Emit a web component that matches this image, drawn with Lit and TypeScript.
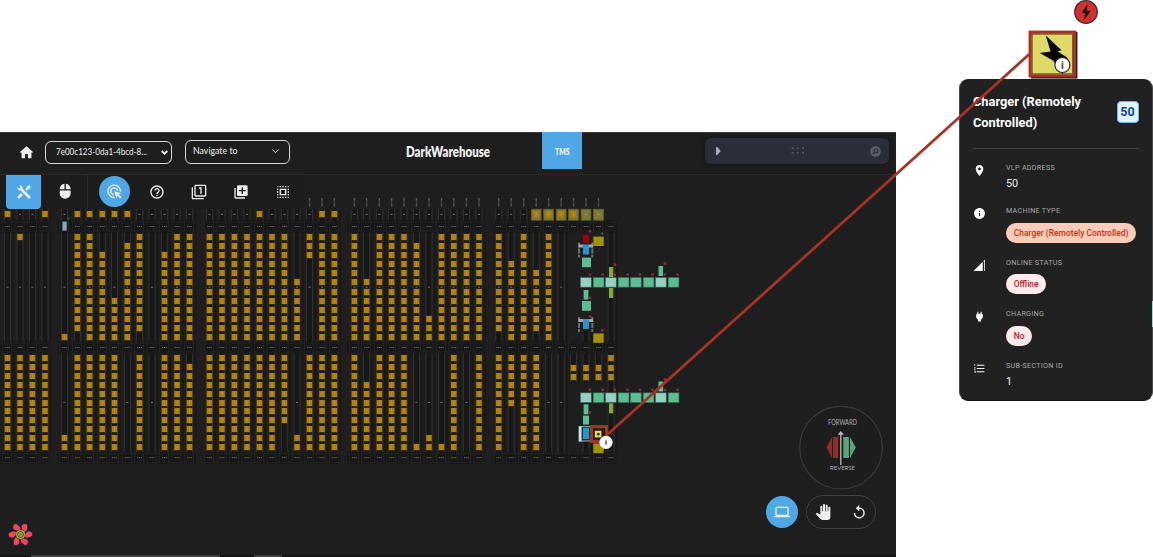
import { LitElement, html, svg, css } from "lit";
import { customElement, property } from "lit/decorators.js";

const ICONS: Record<string, string> = {
  home: "M10 20v-6h4v6h5v-8h3L12 3 2 12h3v8z",
  tools: "M21.71 20.29L20.29 21.71A1 1 0 0 1 18.88 21.71L7 9.85A3.81 3.81 0 0 1 6 10A4 4 0 0 1 2.22 4.7L4.76 7.24L5.29 6.71L6.71 5.29L7.24 4.76L4.7 2.22A4 4 0 0 1 10 6A3.81 3.81 0 0 1 9.85 7L21.71 18.88A1 1 0 0 1 21.71 20.29M2.29 18.88A1 1 0 0 0 2.29 20.29L3.71 21.71A1 1 0 0 0 5.12 21.71L10.59 16.25L7.76 13.42M20 2L16 4V6L13.83 8.17L15.83 10.17L18 8H20L22 4Z",
  mouse: "M13 1.07V9h7c0-4.08-3.05-7.44-7-7.93zM4 15c0 4.42 3.58 8 8 8s8-3.58 8-8v-4H4v4zm7-13.93C7.05 1.56 4 4.92 4 9h7V1.07z",
  click: "M11.71 17.99C8.53 17.84 6 15.22 6 12c0-3.31 2.69-6 6-6 3.22 0 5.84 2.53 5.99 5.71l-2.1-.63C15.48 9.31 13.89 8 12 8c-2.21 0-4 1.79-4 4 0 1.89 1.31 3.48 3.08 3.89l.63 2.1zM22 12c0 .3-.01.6-.04.9l-1.97-.59c.01-.1.01-.21.01-.31 0-4.42-3.58-8-8-8s-8 3.58-8 8 3.58 8 8 8c.1 0 .21 0 .31-.01l.59 1.97c-.3.03-.6.04-.9.04-5.52 0-10-4.48-10-10S6.48 2 12 2s10 4.48 10 10zm-3.77 4.26L22 15l-10-3 3 10 1.26-3.77 4.27 4.27 1.98-1.98-4.28-4.26z",
  help: "M11 18h2v-2h-2v2zm1-16C6.48 2 2 6.48 2 12s4.48 10 10 10 10-4.48 10-10S17.52 2 12 2zm0 18c-4.41 0-8-3.59-8-8s3.59-8 8-8 8 3.59 8 8-3.59 8-8 8zm0-14c-2.21 0-4 1.79-4 4h2c0-1.1.9-2 2-2s2 .9 2 2c0 2-3 1.75-3 5h2c0-2.25 3-2.5 3-5 0-2.21-1.79-4-4-4z",
  filter1: "M3 5H1v16c0 1.1.9 2 2 2h16v-2H3V5zm11 10h2V5h-4v2h2v8zm7-14H7c-1.1 0-2 .9-2 2v14c0 1.1.9 2 2 2h14c1.1 0 2-.9 2-2V3c0-1.1-.9-2-2-2zm0 16H7V3h14v14z",
  add: "M4 6H2v14c0 1.1.9 2 2 2h14v-2H4V6zm16-4H8c-1.1 0-2 .9-2 2v12c0 1.1.9 2 2 2h12c1.1 0 2-.9 2-2V4c0-1.1-.9-2-2-2zm-1 9h-4v4h-2v-4H9V9h4V5h2v4h4v2z",
  select: "M3 5h2V3c-1.1 0-2 .9-2 2zm0 8h2v-2H3v2zm4 8h2v-2H7v2zM3 9h2V7H3v2zm10-6h-2v2h2V3zm6 0v2h2c0-1.1-.9-2-2-2zM5 21v-2H3c0 1.1.9 2 2 2zm-2-4h2v-2H3v2zM9 3H7v2h2V3zm2 18h2v-2h-2v2zm8-8h2v-2h-2v2zm0 8c1.1 0 2-.9 2-2h-2v2zm0-12h2V7h-2v2zm0 8h2v-2h-2v2zm-4 4h2v-2h-2v2zm0-16h2V3h-2v2zM7 17h10V7H7v10zm2-8h6v6H9V9z",
  place: "M12 2C8.13 2 5 5.13 5 9c0 5.25 7 13 7 13s7-7.75 7-13c0-3.87-3.13-7-7-7zm0 9.5c-1.38 0-2.5-1.12-2.5-2.5s1.12-2.5 2.5-2.5 2.5 1.12 2.5 2.5-1.12 2.5-2.5 2.5z",
  info: "M12 2C6.48 2 2 6.48 2 12s4.48 10 10 10 10-4.48 10-10S17.52 2 12 2zm1 15h-2v-6h2v6zm0-8h-2V7h2v2z",
  signal: "M1 22L18 5V22zM18.8 4.2L22 1V22H20.6V4.6H18.8z",
  power: "M16.01 7L16 3h-2v4h-4V3H8v4h-.01C7 6.99 6 7.99 6 8.99v5.49L9.5 18v3h5v-3l3.5-3.51v-5.5c0-1-1-2-1.99-1.99z",
  list: "M2 17h2v.5H3v1h1v.5H2v1h3v-4H2v1zm1-9h1V4H2v1h1v3zm-1 3h1.8L2 13.1v.9h3v-1H3.2L5 10.9V10H2v1zm5-6v2h14V5H7zm0 14h14v-2H7v2zm0-6h14v-2H7v2z",
  laptop: "M20 18c1.1 0 1.99-.9 1.99-2L22 6c0-1.1-.9-2-2-2H4c-1.1 0-2 .9-2 2v10c0 1.1.9 2 2 2H0v2h24v-2h-4zM4 6h16v10H4V6z",
  hand: "M23 5.5V20c0 2.2-1.8 4-4 4h-7.3c-1.08 0-2.1-.43-2.85-1.19L1 14.83s1.26-1.23 1.3-1.25c.22-.19.49-.29.79-.29.22 0 .42.06.6.16.04.01 4.31 2.46 4.31 2.46V4c0-.83.67-1.5 1.5-1.5S11 3.17 11 4v7h1V1.5c0-.83.67-1.5 1.5-1.5S15 .67 15 1.5V11h1V2.5c0-.83.67-1.5 1.5-1.5s1.5.67 1.5 1.5V11h1V5.5c0-.83.67-1.5 1.5-1.5s1.5.67 1.5 1.5z",
  replay: "M12 5V1L7 6l5 5V7c3.31 0 6 2.69 6 6s-2.69 6-6 6-6-2.69-6-6H4c0 4.42 3.58 8 8 8s8-3.58 8-8-3.58-8-8-8z",
};

const icon = (name: string, size = 16) => html`<svg class="icon" width=${size} height=${size} viewBox="0 0 24 24"><path d=${ICONS[name]} /></svg>`;

// Each storage lane: x centre, tote at the head, filled slots above and below the middle aisle.
type Lane = [x: number, top: number, upper: string, lower: string];
const FULL = "0-11";
const LOW = "0-10";
const LANES: Lane[] = [
  [7.5, 1, "", LOW], [20, 0, "0-0", LOW], [32.4, 0, "", LOW], [45, 1, "", LOW],
  [64.5, 0, "11-11", "9-10"], [77.4, 1, "0-10", LOW], [89.6, 1, FULL, LOW], [102.3, 1, "2-11", LOW],
  [114.5, 1, "7-11", LOW], [127.3, 1, "1-11", ""], [139.5, 0, "0-10", LOW], [152, 0, "", ""],
  [164.5, 0, "2-11", LOW], [177, 0, FULL, LOW], [189.5, 0, FULL, "1-10"],
  [209.5, 0, FULL, LOW], [222, 0, FULL, LOW], [234.4, 0, FULL, LOW], [247, 0, FULL, LOW],
  [259.5, 1, FULL, LOW], [272, 0, FULL, LOW], [284.4, 0, FULL, "0-7"], [297, 0, "5-11", "9-10"],
  [309.5, 0, "0-2", LOW], [322, 1, FULL, LOW], [334.4, 1, FULL, LOW],
  [354.4, 0, FULL, LOW], [366.6, 0, "5-11", "3-10"], [379.4, 0, FULL, LOW], [391.6, 0, FULL, LOW],
  [404, 0, FULL, LOW], [416.5, 0, "1-11", "10-10"], [429, 0, "9-11", "9-10"], [441.5, 0, FULL, "10-10"],
  [453.8, 0, FULL, LOW], [466.5, 0, FULL, ""], [479, 0, FULL, LOW],
  [498.7, 0, "0-10", LOW], [511.2, 0, "3-11", "0-5"], [523.7, 0, FULL, LOW], [536.2, 1, "4-10", LOW],
  [548.6, 1, FULL, ""], [561.2, 1, "", ""],
];

@customElement("warehouse-map")
export class WarehouseMap extends LitElement {
  static styles = css`
    :host { display: block; }
    svg { display: block; }
  `;

  private range(text: string): number[] {
    if (!text) return [];
    const [a, b] = text.split("-").map(Number);
    return Array.from({ length: b - a + 1 }, (_, i) => a + i);
  }

  private tote(x: number, y: number) {
    const top = Math.round(y - 3);
    return svg`<rect x=${x - 2.8} y=${top - 0.1} width="5.6" height="6.3" fill="#ae7f0d"/><path d="M${x} ${top + 0.5}v5" stroke="#bb8d1c" stroke-width="1"/>`;
  }

  private track(x: number, y: number, h: number) {
    return svg`<rect x=${x - 2.6} y=${y} width="5.2" height=${h} fill="#171717"/><path d="M${x - 3} ${y}v${h}M${x + 3} ${y}v${h}" stroke="#323232" stroke-width=".9"/><path d="M${x + 5.6} ${y}v${h}" stroke="#191919" stroke-width="2"/>`;
  }

  private box(x: number, y: number, w: number, h: number, fill: string) {
    return svg`<rect x=${x} y=${y} width=${w} height=${h} fill=${fill}/>`;
  }

  private conveyor(y: number) {
    return [580.3, 593, 605.3, 618, 630.3, 643, 655.3, 668].map((x, i) =>
      svg`<rect x=${x + 0.3} y=${y + 0.3} width="10.6" height="9.4" fill=${[0, 2, 6].includes(i) ? "#96d0c4" : "#5bbd92"} stroke="#3d7f66" stroke-width=".6"/>
      <circle cx=${x + 9.6} cy=${y - 2.8} r="1.4" fill="#9a282c"/>`);
  }

  private crane(y: number) {
    return svg`<path d="M579 ${y}v15M592.3 ${y}v15" stroke="#6f6f6f" stroke-width="2" stroke-dasharray="5 1"/>
      <path d="M578.6 ${y + 3.5}h5M589 ${y + 3.5}h4" stroke="#a8a8a8" stroke-width="3"/>
      <rect x="583" y=${y + 2} width="6" height="10" fill="#2496c8"/>`;
  }

  render() {
    const bars = [[-2, 52.5], [58, 138], [204, 136.5], [347, 138], [492.5, 124]];
    const xs = [...LANES.map((l) => l[0]), 573.5, 586, 598.5];
    const dots = [[590, 231.4], [615, 264.6], [665, 263.5], [590, 298], [590, 316.5], [602.3, 330.3], [665, 379.5], [590, 412.6]];
    return html`<svg width="896" height="425" viewBox="0 132 896 425">
      ${LANES.map(([x]) => svg`${this.track(x, 209, 12)}${this.track(x, 232, 110)}${this.track(x, 353, 99)}`)}
      ${this.track(611, 221, 231)}
      ${[573.5, 586, 598.5, 611].map((x) => this.track(x, 354, 28))}
      ${this.track(586, 331, 12)}${this.track(586, 441, 12)}
      ${xs.filter((x) => x > 305 || x === 45).map((x) => svg`<path d="M${x} 198v9" stroke="#585858" stroke-width="1.5" stroke-dasharray="3 .8 1 .8"/>`)}
      ${[220.5, 341.5, 452].map((y) => bars.map(([x, w]) => svg`<rect x=${x} y=${y} width=${w} height="12" fill="#171717"/><path d="M${x} ${y + 1.5}h${w}M${x} ${y + 10.5}h${w}" stroke="#202020" stroke-width="1"/>`))}
      ${[226.5, 347.5, 457.6].map((y) => [...xs, 611].map((x) => svg`<path d="M${x - 5} ${y - 6}v12M${x + 4} ${y - 6}v12" stroke="#232323" stroke-width="1"/><path d="M${x - 2.5} ${y}h5" stroke="#686868" stroke-width=".9" stroke-dasharray="1.4 .5"/>`))}
      ${LANES.map(([x]) => [214.4, 287.2, 402.4].map((y) => svg`<path d="M${x - 1} ${y}h2" stroke="#777" stroke-width="1"/>`))}
      ${[536.2, 548.6, 561.2, 573.5, 586, 598.5].map((x) => svg`<rect x=${x - 4.9} y="209.2" width="9.8" height="11" fill="#7e7838" stroke="#655f24" stroke-width=".8"/><path d="M${x - 1} 214.4h2" stroke="#aaa" stroke-width=".8"/>`)}
      ${LANES.map(([x, top, up, low]) => svg`
        ${top ? this.tote(x, 214.4) : ""}
        ${this.range(up).map((i) => this.tote(x, 237 + i * 9.09))}
        ${this.range(low).map((i) => this.tote(x, 358 + i * 8.9))}`)}
      ${this.tote(573.5, 214.4)}
      ${[573.5, 586, 598.5, 611].map((x) => [368, 377].map((y) => this.tote(x, y)))}
      ${this.tote(611, 358.4)}
      <rect x="62.4" y="221.7" width="4.4" height="9" fill="#9aa5aa" stroke="#2c7188" stroke-width=".7"/>
      <circle cx="68.5" cy="218.6" r="1.2" fill="#1c6b28"/>
      ${this.box(609, 267, 4.2, 10, "#86a83a")}${this.box(609, 288, 4.2, 10, "#86a83a")}${this.box(609, 403.3, 4.2, 10, "#86a83a")}
      ${this.conveyor(277.4)}${this.conveyor(392.6)}
      ${this.box(658.5, 266, 4.6, 10, "#5bbd92")}${this.box(658.5, 381.5, 4.6, 10, "#5bbd92")}
      ${this.box(583, 235, 6, 8, "#9c0205")}
      ${this.crane(242.5)}${this.crane(317)}
      ${this.box(582, 257.6, 9, 9.6, "#5bbd92")}${this.box(583.6, 290, 4.8, 9.6, "#5bbd92")}${this.box(582, 301, 9, 9.8, "#5bbd92")}
      ${this.box(583.6, 404.3, 4.8, 10, "#5bbd92")}${this.box(583, 415.6, 6, 9, "#5bbd92")}
      ${this.box(593.3, 236.6, 10.4, 9.4, "#a59106")}${this.box(593.3, 333.4, 10.4, 9.4, "#a59106")}${this.box(593.3, 443.5, 10.4, 9.6, "#a59106")}
      <rect x="579" y="426.6" width="13.5" height="14.4" fill="#253238" stroke="#9cc0c4" stroke-width=".9"/>
      ${this.box(579, 426.4, 2.6, 15, "#d8dcdc")}${this.box(583, 428, 6, 11, "#2496c8")}
      ${dots.map(([x, y]) => svg`<circle cx=${x} cy=${y} r="1.4" fill="#9a282c"/>`)}
      <circle cx="602.3" cy="233.5" r="1.3" fill="#226d30"/>
      ${this.box(594.8, 430.8, 6.6, 6.6, "#e6df55")}
      <circle cx="598.3" cy="434.2" r="1.4" fill="#33300a"/>
      <rect x="591.6" y="426.6" width="15" height="15" fill="none" stroke="#a93226" stroke-width="3"/>
    </svg>`;
  }
}

@customElement("info-card")
export class InfoCard extends LitElement {
  static styles = css`
    :host { display: block; box-sizing: border-box; background: #212121; color: #fff; border-radius: 9px; border: 1px solid #4b4b4b; border-top-color: #212121; border-bottom-color: #111; padding: 11.5px 13px 0 13.5px; font-family: Roboto, sans-serif; }
    .head { display: flex; align-items: center; justify-content: space-between; height: 56px; border-bottom: 1px solid #424242; }
    .title { font-size: 12.8px; line-height: 20.5px; font-weight: 700; width: 118px; padding-bottom: 14px; }
    .badge { box-sizing: border-box; width: 22px; height: 22px; margin-bottom: 15px; border-radius: 4px; border: 1px solid #64b5f6; background: #e3f2fd; color: #0d47a1; font-size: 12.5px; font-weight: 700; line-height: 20px; text-align: center; }
    .rows { display: grid; grid-template-rows: 43px 51.8px 51.4px 52px 40px; padding-top: 14.5px; }
    .row { display: grid; grid-template-columns: 33px 1fr; align-items: start; }
    .icon { fill: #fff; margin-top: 1px; }
    .label { font-size: 7.2px; line-height: 10px; letter-spacing: .28px; color: #a6a6a6; white-space: nowrap; }
    .value { font-size: 10.8px; line-height: 14px; margin-top: 4px; color: #eee; }
    .chip { display: inline-block; box-sizing: border-box; margin-top: 6.5px; height: 20px; line-height: 20px; border-radius: 10px; padding: 0 7.8px; font-size: 8.45px; font-weight: 500; white-space: nowrap; background: #ffebee; color: #b71c1c; }
    .peach { background: #ffccbc; color: #bf360c; }
  `;
  render() {
    const row = (ic: string, label: string, value: unknown) => html`<div class="row">${icon(ic, 13)}<div><div class="label">${label}</div>${value}</div></div>`;
    return html`
      <div class="head"><div class="title">Charger (Remotely Controlled)</div><div class="badge">50</div></div>
      <div class="rows">
        ${row("place", "VLP ADDRESS", html`<div class="value">50</div>`)}
        ${row("info", "MACHINE TYPE", html`<span class="chip peach">Charger (Remotely Controlled)</span>`)}
        ${row("signal", "ONLINE STATUS", html`<span class="chip">Offline</span>`)}
        ${row("power", "CHARGING", html`<span class="chip">No</span>`)}
        ${row("list", "SUB-SECTION ID", html`<div class="value">1</div>`)}
      </div>`;
  }
}

@customElement("fit-text")
export class FitText extends LitElement {
  static styles = css`
    :host { display: block; height: 14px; }
    svg { display: block; overflow: visible; }
    text { font-family: Lato, sans-serif; fill: currentColor; }
  `;
  @property() text = "";
  @property({ type: Number }) width = 50;
  @property({ type: Number }) size = 10;
  @property({ type: Number }) weight = 400;
  render() {
    return html`<svg width=${this.width} height="14"><text x="0" y="11" font-size=${this.size} font-weight=${this.weight} textLength=${this.width} lengthAdjust="spacingAndGlyphs">${this.text}</text></svg>`;
  }
}

@customElement("app-root")
export class AppRoot extends LitElement {
  static styles = css`
    :host { display: block; position: relative; width: 1153px; height: 557px; overflow: hidden; background: #fff; font-family: Lato, sans-serif; }
    .page { display: grid; grid-template-columns: 896px 62.5px 194px; height: 557px; }
    .console { position: relative; margin-top: 132px; height: 425px; background: #1e1e1e; color: #eee; display: flex; flex-direction: column; overflow: hidden; }
    .map { position: absolute; inset: 0; }
    .icon { fill: #eee; display: block; }
    .header { position: relative; box-sizing: border-box; height: 42.5px; flex: none; display: flex; background: #1e1e1e; border-top: 1px solid #3c3c3c; border-bottom: 1px solid #292929; }
    .home { width: 27.4px; margin-left: 17.6px; padding-top: 11px; }
    .pick { box-sizing: border-box; display: flex; justify-content: space-between; border: 1px solid #d8d8d8; border-radius: 6px; }
    .site { width: 127px; height: 22.5px; margin: 8px 13px 0 0; padding: 2px 2px 0 10px; }
    .nav { width: 105px; height: 24px; margin-top: 7px; padding: 2px 9px 0 7px; }
    .chev { fill: none; stroke: #eee; display: block; margin-top: 4px; }
    .brand { margin: 13px 0 0 116px; }
    .tms { width: 40px; height: 37px; margin: -1px 0 0 52.4px; box-sizing: border-box; padding: 11.5px 0 0 13px; background: #4fa8e5; }
    .search { width: 184px; height: 26px; margin: 5px 0 0 123px; background: #2b2e3a; border-radius: 6px; box-shadow: 0 0 4px #111; display: flex; align-items: center; justify-content: space-between; box-sizing: border-box; padding: 0 8px 0 10.5px; }
    .grip { margin-left: 4px; }
    .toolbar { position: relative; flex: none; display: flex; align-items: center; width: 303.5px; height: 34px; background: #1c1c1c; border-radius: 0 0 4px 4px; }
    .cell { display: flex; align-items: center; justify-content: center; }
    .tab { flex: none; width: 35px; height: 34px; margin-left: 6px; border-radius: 0 0 4px 4px; background: #4fa8e5; }
    .mouse { box-sizing: border-box; flex: none; width: 47px; height: 34px; padding-left: 3px; border-right: 1px solid #2b2b2b; }
    .tools { flex: none; display: grid; grid-template-columns: repeat(5, 42px); padding-left: 5.5px; }
    .disc { width: 31px; height: 31px; border-radius: 50%; background: #4fa8e5; display: flex; align-items: center; justify-content: center; }
    .dial { position: absolute; left: 799px; top: 274px; }
    .dial text { font-family: Lato, sans-serif; fill: #b0b0b0; }
    .views { position: absolute; left: 766px; top: 363px; display: flex; align-items: center; gap: 8px; }
    .disc.big { width: 32px; height: 32px; }
    .pill { box-sizing: border-box; width: 70px; height: 34px; border: 1.5px solid #414141; border-radius: 17px; display: flex; align-items: center; justify-content: space-between; padding: 0 8px; }
    .flower { position: absolute; left: 7px; top: 388.5px; }
    .foot { position: relative; margin-top: auto; height: 2px; background: #171314; display: flex; gap: 34px; padding-left: 31px; }
    .foot i { width: 189px; background: #3c3c3c; }
    .foot b { width: 28px; background: #3c3c3c; }
    info-card { grid-column: 3; margin-top: 79px; height: 322px; }
    .overlay { position: absolute; left: 0; top: 0; }
    .mark { font-family: Roboto, sans-serif; font-weight: 700; text-anchor: middle; fill: #444; }
  `;

  render() {
    const petals = [0, 60, 120, 180, 240, 300];
    return html`
      <div class="page">
        <div class="console">
          <warehouse-map class="map"></warehouse-map>
          <div class="header">
            <div class="home">${icon("home", 17)}</div>
            <div class="pick site">
              <fit-text text="7e00c123-0da1-4bcd-8..." width="91" size="10.2"></fit-text>
              <svg class="chev" width="9" height="9" viewBox="0 0 9 9"><path d="M1.7 3L4.5 5.8 7.3 3" stroke-width="1.8"/></svg>
            </div>
            <div class="pick nav">
              <fit-text text="Navigate to" width="44.5" size="10.4"></fit-text>
              <svg class="chev" width="9" height="9" viewBox="0 0 9 9"><path d="M1.3 2.5L4.5 5.7 7.7 2.5" stroke-width=".9"/></svg>
            </div>
            <fit-text class="brand" text="DarkWarehouse" width="84" size="14" weight="800"></fit-text>
            <div class="tms"><fit-text text="TMS" width="14.5" size="9.6" weight="800"></fit-text></div>
            <div class="search">
              <svg width="5" height="8" viewBox="0 0 5 8"><path d="M0 0h1.2L4.8 4 1.2 8H0z" fill="#a9acb8"/></svg>
              <svg class="grip" width="14" height="8" viewBox="0 0 14 8">${[1.5, 6.7, 12].map((x) => [1.2, 5.8].map((y) => svg`<rect x=${x - 0.8} y=${y - 0.8} width="1.6" height="1.6" fill="#5c5f6c"/>`))}</svg>
              <svg width="11" height="11" viewBox="0 0 11 11"><circle cx="5.5" cy="5.5" r="5.4" fill="#585b68"/><circle cx="6" cy="4.8" r="2" fill="none" stroke="#2b2e3a" stroke-width="1.1"/><path d="M4.6 6.3L2.8 8.2" stroke="#2b2e3a" stroke-width="1.2"/></svg>
            </div>
          </div>
          <div class="toolbar">
            <div class="tab cell">${icon("tools", 16)}</div>
            <div class="mouse cell">${icon("mouse", 16.4)}</div>
            <div class="tools">
              <div class="cell"><div class="disc">${icon("click", 16.5)}</div></div>
              ${["help", "filter1", "add", "select"].map((n) => html`<div class="cell">${icon(n, 16)}</div>`)}
            </div>
          </div>
          <svg class="dial" width="84" height="84" viewBox="799 406 84 84">
            <circle cx="841" cy="447.6" r="41.3" fill="#1d1d1d" stroke="#3a3a3a" stroke-width="1.2"/>
            <text x="828" y="425" font-size="6.8" textLength="29" lengthAdjust="spacingAndGlyphs">FORWARD</text>
            <text x="830" y="470.3" font-size="6.4" textLength="25" lengthAdjust="spacingAndGlyphs">REVERSE</text>
            <path d="M826.5 447.5L832 437v21zM833 437h5.2v21H833z" fill="#8c302b"/>
            <path d="M843.3 437h5.6v21h-5.6zM850 437l5.8 10.5L850 458z" fill="#59a578"/>
            <path d="M840.8 433v32" stroke="#bbb" stroke-width="1.3"/><path d="M837.6 434.8l3.2-3.8 3.2 3.8z" fill="#bbb"/>
          </svg>
          <div class="views">
            <div class="disc big">${icon("laptop", 16)}</div>
            <div class="pill">${icon("hand", 16)}${icon("replay", 16.5)}</div>
          </div>
          <svg class="flower" width="27" height="27" viewBox="-13.5 -13.5 27 27">
            ${petals.map((a) => svg`<path transform="rotate(${a})" d="M3.5 1.2C4.6 -1.4 7 -4 9.2 -3.5C11.2 -3 12.6 -1 12.2 .6C11.6 2.6 8.6 3.2 6.4 3.6C5 3.4 3.6 2.6 3.5 1.2z" fill="#ff4154" stroke="#0c2b49" stroke-width=".9"/>`)}
            <circle r="4.9" fill="#3a4c1c"/><circle r="4" fill="none" stroke="#d8c728" stroke-width="1"/><circle r="2.2" fill="#6d8c3c" stroke="#c7b92b" stroke-width=".7"/>
          </svg>
          <div class="foot"><i></i><b></b></div>
        </div>
        <info-card></info-card>
      </div>
      <svg class="overlay" width="1153" height="557" viewBox="0 0 1153 557">
        <rect x="1152" y="301" width="1" height="26" fill="#8fe0c8"/>
        <rect x="1031" y="32" width="46.4" height="46.5" fill="#141414"/>
        <rect x="1030.2" y="32.2" width="44.4" height="43.6" fill="#dfd968" stroke="#a93226" stroke-width="3.2"/>
        <rect x="1032.2" y="34.2" width="40.4" height="39.6" fill="none" stroke="#4d4a1c" stroke-width=".8"/>
        <path d="M1045.7 35.5L1061.5 50.2 1057.8 51.4 1067 57.5 1069 62 1062.5 74 1053 60.5 1039.7 53 1050.6 51.4z" fill="#050505"/>
        <path d="M608 434L1029.5 54" stroke="#a93226" stroke-width="2.7"/>
        <circle cx="606" cy="442.3" r="6.6" fill="#fff"/>
        <path d="M606 440.5v4" stroke="#222" stroke-width="1.2"/>
        <circle cx="1062.4" cy="65" r="7.5" fill="#fff" stroke="#222" stroke-width="1.1"/>
        <text class="mark" x="1062.4" y="69" font-size="10.5">i</text>
        <circle cx="1086" cy="12" r="11.3" fill="#d42f2f" stroke="#3a2a2a" stroke-width="1.2"/>
        <path d="M1087.5 4L1081.5 13H1085L1084 20.3 1090.8 10.8H1087z" fill="#201414"/>
      </svg>`;
  }
}
